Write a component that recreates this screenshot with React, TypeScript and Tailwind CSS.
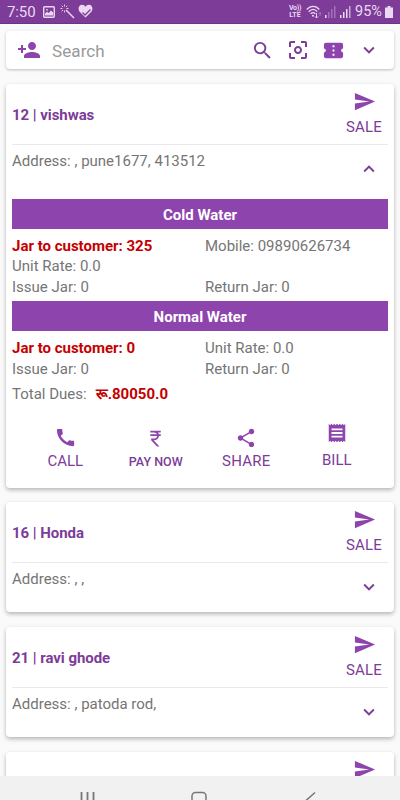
import type { ReactNode } from "react";
import {
  MdCall,
  MdCenterFocusWeak,
  MdConfirmationNumber,
  MdCurrencyRupee,
  MdExpandLess,
  MdExpandMore,
  MdPersonAdd,
  MdReceipt,
  MdSearch,
  MdSend,
  MdShare,
} from "react-icons/md";

const StatusBar = () => (
  <div className="flex h-6 shrink-0 items-center border-b border-[#6c3483] bg-[#7d3c98] pr-[7px] pl-[7px] text-[#ead8f2]">
    <span className="w-[29px] text-[15px] leading-6 tracking-[-0.1px] whitespace-nowrap">7:50</span>
    <svg className="ml-[7px]" width="12" height="12" viewBox="0 0 12 12">
      <rect x="0.7" y="0.7" width="10.6" height="10.6" rx="1" fill="none" stroke="currentColor" strokeWidth="1.4" />
      <path d="M2 9.500V7.500l2.200-1.800 1.600 1.200L8 4.500l2.200 2v3z" fill="currentColor" />
      <circle cx="4" cy="3.8" r="0.9" fill="currentColor" />
    </svg>
    <svg className="ml-[5px]" width="15" height="15" viewBox="0 0 15 15" fill="none" stroke="currentColor">
      <path d="M6 6l8 8" strokeWidth="1.5" />
      <path d="M4.500 0.500v2M4.500 6.500v2M0.500 4.500h2M6.500 4.500h2M1.700 1.700l1.300 1.300M7.300 1.700L6 3M1.700 7.300L3 6" strokeWidth="0.9" />
    </svg>
    <svg className="ml-[3px] -mt-0.5" width="15" height="14" viewBox="0 0 15 14">
      <path d="M7.500 13.500L1.600 7.700C-0.500 5 0.700 0.700 4 0.700c1.600 0 2.800.8 3.500 2 .7-1.200 1.900-2 3.500-2 3.300 0 4.500 4.300 2.400 7z" fill="currentColor" />
      <path d="M4.500 8.500l2.500 2.500 5.500-5.500" fill="none" stroke="#7d3c98" strokeWidth="1.300" />
    </svg>
    <div className="ml-auto flex w-3 flex-col items-center text-[7px] leading-[7px] font-bold">
      <span className="tracking-[-0.3px]">Vo))</span>
      <span>LTE</span>
    </div>
    <svg className="ml-[5px]" width="16" height="14" viewBox="0 0 16 14" fill="none" stroke="currentColor" strokeWidth="1.300">
      <path d="M0.700 4.500C4.500 0.200 10 0.200 13.300 4.500M2.700 6.700C5.500 3.600 8.700 3.600 11.300 6.700M4.700 8.800c1.600-1.600 3-1.600 4.600 0" />
      <circle cx="7" cy="10.800" r="1" fill="currentColor" stroke="none" />
      <path d="M10.500 8v5M9 11.500l1.500 1.500 1.500-1.500" strokeWidth="1" />
      <path d="M14 11V7.500M13 8.500l1-1 1 1" strokeWidth="0.800" opacity="0.500" />
    </svg>
    <svg className="ml-[3px]" width="11" height="12" viewBox="0 0 11 12" fill="currentColor">
      <path d="M0 9h1.500v3H0z" />
      <path d="M3 6h1.500v6H3zM6 3h1.500v9H6zM9 0h1.500v12H9z" opacity="0.350" />
    </svg>
    <svg className="ml-1" width="11" height="12" viewBox="0 0 11 12" fill="currentColor">
      <path d="M0 9h1.500v3H0zM3 6h1.500v6H3zM6 3h1.500v9H6z" />
      <path d="M9 0h1.500v12H9z" opacity="0.700" />
    </svg>
    <span className="ml-1 w-[28px] pt-px text-[14.500px] leading-6 whitespace-nowrap">95%</span>
    <svg className="ml-0.5" width="8" height="12" viewBox="0 0 8 12" fill="currentColor">
      <path d="M2.500 0h3v1.500H8V12H0V1.500h2.500z" />
    </svg>
  </div>
);

const Card = ({ children, className = "" }: { children?: ReactNode; className?: string }) => (
  <div className={`mx-1.5 shrink-0 rounded-[4px] bg-white px-1.5 ${className}`}>{children}</div>
);

const CardHeader = ({ title }: { title?: string }) => (
  <div className="flex h-[61px] justify-between border-b border-[#ebe8eb]">
    <h2 className="pt-[21px] text-[15px] leading-[21px] font-bold tracking-[-0.05px]">{title}</h2>
    <button type="button" className="flex w-12 flex-col items-center pt-1.5">
      <MdSend size={23} color="#8e44ad" />
      {title && <span className="mt-1 text-[15px] leading-5 tracking-[0.200px]">SALE</span>}
    </button>
  </div>
);

const Address = ({ value }: { value: string }) => (
  <p className="pt-1.5 text-[15px] leading-5 text-[#757575]">Address: {value}</p>
);

const CustomerCard = ({ title, address }: { title: string; address: string }) => (
  <Card className="mb-[15px] h-[110px] shadow-[0_2px_4px_rgba(0,0,0,0.28)]">
    <CardHeader title={title} />
    <div className="flex justify-between">
      <Address value={address} />
      <MdExpandMore size={22} className="mt-[13px] mr-2" />
    </div>
  </Card>
);

const Banner = ({ label }: { label: string }) => (
  <div className="h-[30px] bg-[#8e44ad] text-center text-[15px] leading-[32px] font-bold text-white">{label}</div>
);

const Action = ({ icon, label, className = "" }: { icon: ReactNode; label: string; className?: string }) => (
  <button type="button" className={`flex flex-1 flex-col items-center ${className}`}>
    {icon}
    {label}
  </button>
);

const App = () => {
  return (
    <div className="flex h-[800px] w-[400px] flex-col overflow-hidden bg-[#fafafa] font-[Roboto,sans-serif] text-[#7d3c98]">
      <StatusBar />
      <main className="flex min-h-0 flex-1 flex-col overflow-hidden">
        <Card className="mt-[7px] mb-[15px] flex h-[38px] items-center shadow-[0_1px_3px_rgba(0,0,0,0.240)]">
          <MdPersonAdd size={24} color="#8e44ad" className="ml-[5px]" />
          <span className="ml-[11px] pt-[3px] text-[17px] tracking-[0.1px] text-[#999999]">Search</span>
          <MdSearch size={23} className="ml-auto" />
          <MdCenterFocusWeak size={24} className="ml-3" />
          <MdConfirmationNumber size={23} color="#8e44ad" className="ml-3" />
          <MdExpandMore size={22} className="mr-2 ml-[13px]" />
        </Card>

        <Card className="mb-[14px] h-[404px] shadow-[0_2px_4px_rgba(0,0,0,0.28)]">
          <CardHeader title="12 | vishwas" />
          <div className="flex h-[54px] justify-between">
            <Address value=", pune1677, 413512" />
            <MdExpandLess size={22} className="mt-[13px] mr-2" />
          </div>

          <Banner label="Cold Water" />
          <div className="grid h-[72px] grid-cols-[193px_1fr] content-start pt-[6.5px] text-[15px] leading-[20.500px] text-[#757575]">
            <span className="font-bold text-[#c40000]">Jar to customer: 325</span>
            <span>Mobile: 09890626734</span>
            <span className="col-span-2">Unit Rate: 0.0</span>
            <span>Issue Jar: 0</span>
            <span>Return Jar: 0</span>
          </div>

          <Banner label="Normal Water" />
          <div className="grid grid-cols-[193px_1fr] pt-[7px] text-[15px] leading-[20.500px] text-[#757575]">
            <span className="font-bold text-[#c40000]">Jar to customer: 0</span>
            <span>Unit Rate: 0.0</span>
            <span>Issue Jar: 0</span>
            <span>Return Jar: 0</span>
          </div>
          <div className="mt-[5px] flex h-5 items-center text-[15px] leading-5 text-[#757575]">
            <span>Total Dues:</span>
            <span className="ml-[9px] font-bold text-[#c40000]">रू.80050.0</span>
          </div>

          <div className="mt-[22px] flex px-1.5 text-[15px] leading-5">
            <Action icon={<MdCall size={23} color="#8e44ad" className="mb-0.5" />} label="CALL" className="pl-0.5" />
            <Action
              icon={<MdCurrencyRupee size={21} color="#8e44ad" className="mt-0.5 mb-[3px]" />}
              label="PAY NOW"
              className="text-[12.500px] font-medium"
            />
            <Action icon={<MdShare size={22} color="#8e44ad" className="mt-px mb-0.5" />} label="SHARE" className="tracking-[0.2px]" />
            <Action icon={<MdReceipt size={22} color="#8e44ad" className="-mt-1 mb-1.5" />} label="BILL" />
          </div>
        </Card>

        <CustomerCard title="16 | Honda" address=", ," />
        <CustomerCard title="21 | ravi ghode" address=", patoda rod," />
        <Card className="shadow-[0_2px_4px_rgba(0,0,0,0.28)]">
          <CardHeader />
        </Card>
      </main>

      <nav className="flex h-6 shrink-0 bg-[#f1f1f1] text-[#777777]">
        <svg width="400" height="24" viewBox="0 0 400 24" fill="none" stroke="currentColor" strokeWidth="1.500">
          <path d="M81.500 16v14M87.500 16v14M93.500 16v14" strokeWidth="1.800" />
          <rect x="192" y="16.500" width="14" height="14" rx="3.500" />
          <path d="M315 16.500l-9 8 9 8" />
        </svg>
      </nav>
    </div>
  );
};

export default App;
